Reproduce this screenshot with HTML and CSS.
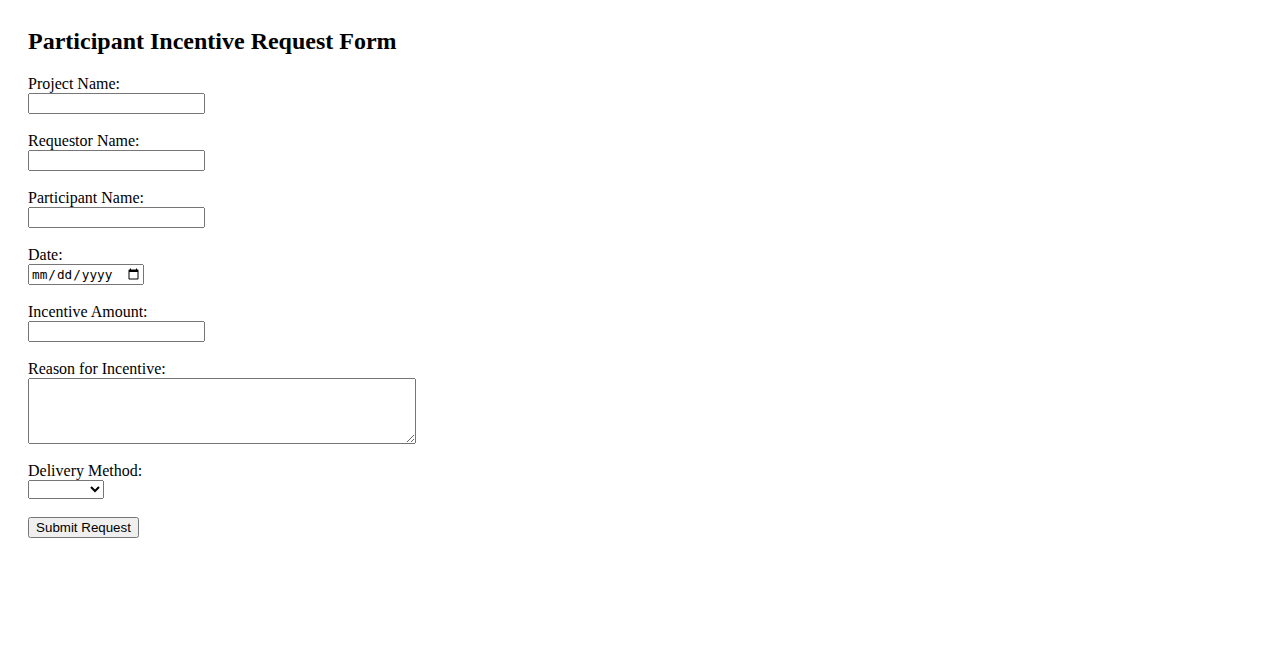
FILE: index.html
```html
<!DOCTYPE html>
<html lang="en">
<head>
<meta charset="utf-8">
<title>Participant Incentive Request Form</title>
<link rel="stylesheet" href="styles.css">
</head>
<body>
<div class="page">
  <h2 class="title">Participant Incentive Request Form</h2>
  <form class="form">
    <div class="field">
      <label for="project">Project Name:</label>
      <input class="text-input" type="text" id="project" name="project">
    </div>
    <div class="field">
      <label for="requestor">Requestor Name:</label>
      <input class="text-input" type="text" id="requestor" name="requestor">
    </div>
    <div class="field">
      <label for="participant">Participant Name:</label>
      <input class="text-input" type="text" id="participant" name="participant">
    </div>
    <div class="field">
      <label for="date">Date:</label>
      <input class="date-input" type="date" id="date" name="date">
    </div>
    <div class="field">
      <label for="amount">Incentive Amount:</label>
      <input class="text-input" type="text" id="amount" name="amount">
    </div>
    <div class="field">
      <label for="reason">Reason for Incentive:</label>
      <textarea class="textarea" id="reason" name="reason"></textarea>
    </div>
    <div class="field">
      <label for="method">Delivery Method:</label>
      <select class="select" id="method" name="method">
        <option value=""></option>
        <option value="gift">Gift Card</option>
        <option value="check">Check</option>
        <option value="cash">Cash</option>
      </select>
    </div>
    <div class="field">
      <button class="submit" type="submit">Submit Request</button>
    </div>
  </form>
</div>
</body>
</html>
```
FILE: styles.css
```css
html, body {
  margin: 0;
  padding: 0;
  background: #ffffff;
}

body {
  font-family: "Liberation Serif", "Times New Roman", serif;
  font-size: 16px;
  color: #000000;
}

.page {
  padding: 28px;
}

.title {
  margin: 0 0 19.92px 0;
  font-size: 24px;
  font-weight: bold;
  line-height: normal;
}

.form {
  margin: 0;
}

.field {
  display: flex;
  flex-direction: column;
  align-items: flex-start;
  margin-bottom: 18px;
}

.field label {
  height: 18px;
  line-height: 18px;
}

.text-input {
  box-sizing: border-box;
  width: 177px;
  height: 21px;
  margin: 0;
}

.date-input {
  box-sizing: border-box;
  width: 116px;
  height: 21px;
  margin: 0;
  font-size: 12.7px;
}

.textarea {
  box-sizing: border-box;
  width: 388px;
  height: 66px;
  margin: 0;
}

.select {
  box-sizing: border-box;
  width: 76px;
  height: 19px;
  margin: 0;
}

.submit {
  box-sizing: border-box;
  width: 111px;
  height: 21px;
  margin: 0;
  font-family: "Liberation Sans", Arial, sans-serif;
  font-size: 13.33px;
}
```
